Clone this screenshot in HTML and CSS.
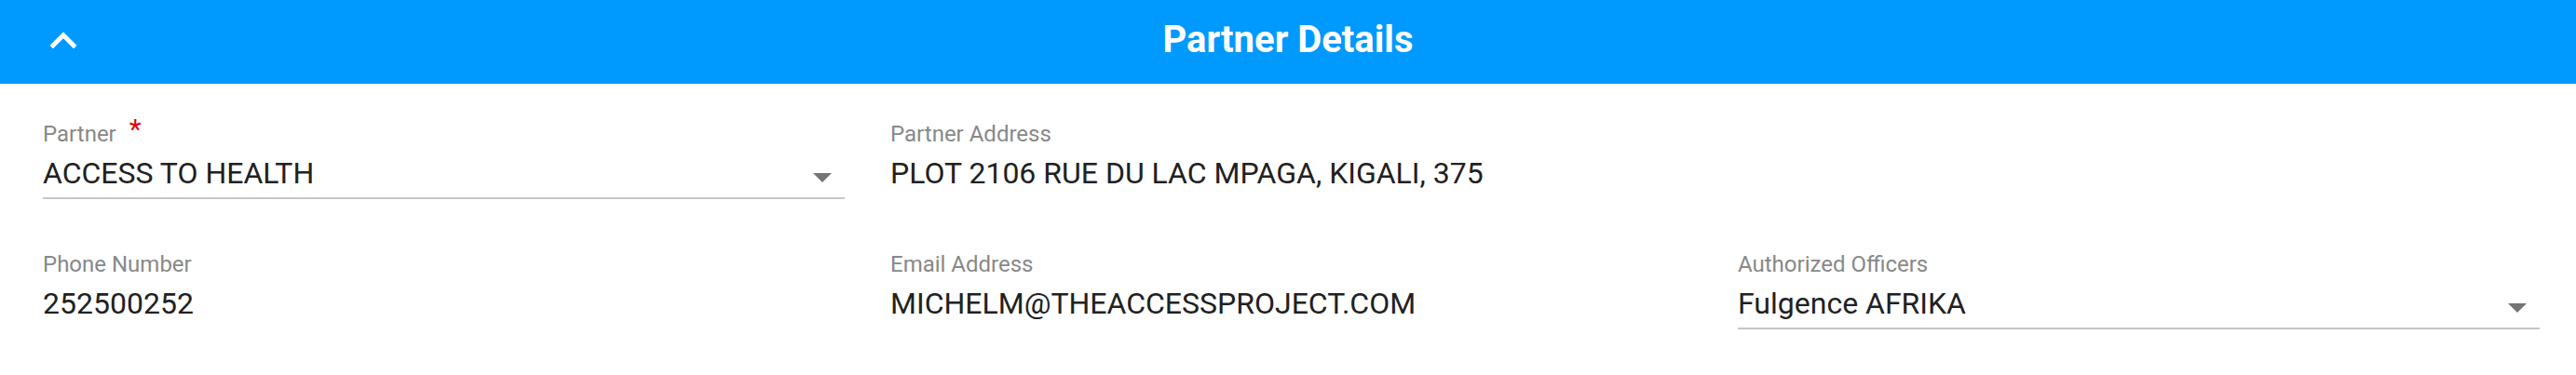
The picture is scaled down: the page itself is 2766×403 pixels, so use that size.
FILE: index.html
```html
<!DOCTYPE html>
<html lang="en">
<head>
  <meta charset="UTF-8" />
  <meta name="viewport" content="width=device-width, initial-scale=1.0"/>
  <title>Partner Details</title>
  <link rel="stylesheet" href="styles.css">
</head>
<body>
  <section class="panel">
    <header class="panel-head">
      <button class="collapse-btn" aria-label="Collapse">
        <svg viewBox="0 0 24 24" width="58" height="58"><path d="M12 8l-6 6 1.41 1.41L12 10.83l4.59 4.58L18 14z" fill="#fff"/></svg>
      </button>
      <h1 class="panel-title">Partner Details</h1>
    </header>

    <div class="panel-body">
      <div class="field select">
        <label>Partner<span class="required">*</span></label>
        <div class="value">
          <span>ACCESS TO HEALTH</span>
          <i class="caret"></i>
        </div>
      </div>
      <div class="field">
        <label>Partner Address</label>
        <div class="value"><span>PLOT 2106 RUE DU LAC MPAGA, KIGALI, 375</span></div>
      </div>
      <div class="field"></div>

      <div class="field">
        <label>Phone Number</label>
        <div class="value"><span>252500252</span></div>
      </div>
      <div class="field">
        <label>Email Address</label>
        <div class="value"><span>MICHELM@THEACCESSPROJECT.COM</span></div>
      </div>
      <div class="field select">
        <label>Authorized Officers</label>
        <div class="value">
          <span>Fulgence AFRIKA</span>
          <i class="caret"></i>
        </div>
      </div>
    </div>
  </section>
</body>
</html>
```

FILE: styles.css
```css
* { box-sizing: border-box; margin: 0; padding: 0; }
body {
  background: #fff;
  font-family: Roboto, 'Liberation Sans', sans-serif;
  color: #212121;
}
.panel-head {
  position: relative;
  height: 90px;
  background: #0099fe;
  display: flex;
  align-items: center;
  justify-content: center;
}
.collapse-btn {
  position: absolute;
  left: 39px;
  top: 15px;
  width: 58px;
  height: 58px;
  background: none;
  border: none;
  cursor: pointer;
}
.collapse-btn svg { display: block; }
.panel-title {
  color: #fff;
  font-size: 40px;
  font-weight: 700;
  line-height: 40px;
  margin-bottom: 5px;
}
.panel-body {
  display: grid;
  grid-template-columns: repeat(3, 1fr);
  column-gap: 49px;
  row-gap: 56px;
  padding: 40px 39px 48px 46px;
}
.field label {
  display: block;
  font-size: 24px;
  line-height: 28px;
  color: #888;
  margin-bottom: 8px;
}
.required {
  color: #e00000;
  font-size: 30px;
  line-height: 0;
  margin-left: 14px;
  vertical-align: 3px;
}
.field .value {
  display: flex;
  align-items: center;
  justify-content: space-between;
  font-size: 32px;
  line-height: 40px;
  padding-bottom: 6px;
  border-bottom: 2px solid transparent;
  white-space: nowrap;
}
.field.select .value { border-bottom-color: #c6c6c6; }
.caret {
  width: 0;
  height: 0;
  border-left: 10px solid transparent;
  border-right: 10px solid transparent;
  border-top: 10px solid #757575;
  margin: 9px 14px 0 0;
}
```
